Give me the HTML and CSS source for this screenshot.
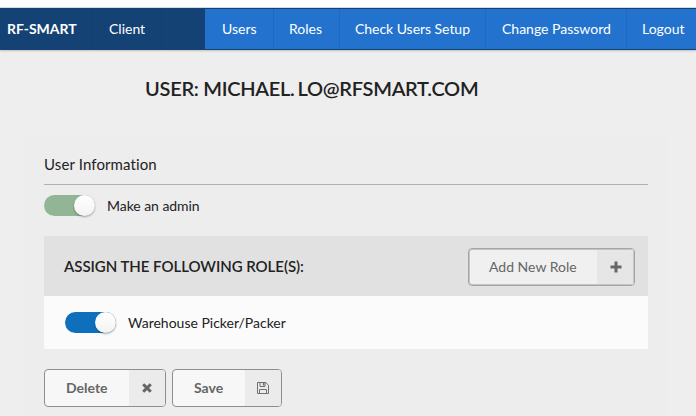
FILE: index.html
```html
<!DOCTYPE html>
<html lang="en">
<head>
<meta charset="utf-8">
<title>User</title>
<link rel="stylesheet" href="styles.css">
</head>
<body>
<nav class="nav">
  <a class="nav-item brand">RF-SMART</a>
  <a class="nav-item client">Client</a>
  <span class="nav-item spacer"></span>
  <a class="nav-item link users">Users</a>
  <a class="nav-item link roles">Roles</a>
  <a class="nav-item link check">Check Users Setup</a>
  <a class="nav-item link change">Change Password</a>
  <a class="nav-item link logout">Logout</a>
</nav>
<h1 class="title">USER: MICHAEL.<span class="title-rest">LO@RFSMART.COM</span></h1>
<main class="panel">
  <h2 class="section-title">User Information</h2>
  <div class="toggle-row">
    <span class="toggle green"><i class="knob"></i></span>
    <span class="label-admin">Make an admin</span>
  </div>
  <section class="roles-card">
    <header class="roles-head">
      <span class="roles-title">ASSIGN THE FOLLOWING ROLE(S):</span>
      <button class="btn add">
        <span class="btn-text">Add New Role</span>
        <span class="btn-icon"><svg width="12" height="12" viewBox="0 0 12 12"><path d="M4.5 .5h3v4h4v3h-4v4h-3v-4h-4v-3h4z" fill="#666"/></svg></span>
      </button>
    </header>
    <div class="role-row">
      <span class="toggle blue"><i class="knob"></i></span>
      <span class="label-role">Warehouse Picker/Packer</span>
    </div>
  </section>
  <div class="actions">
    <button class="btn delete">
      <span class="btn-text">Delete</span>
      <span class="btn-icon"><svg width="10" height="10" viewBox="0 0 10 10"><path d="M1.2 1.2l7.6 7.6M8.8 1.2L1.2 8.8" stroke="#666" stroke-width="3"/></svg></span>
    </button>
    <button class="btn save">
      <span class="btn-text">Save</span>
      <span class="btn-icon"><svg width="12" height="12" viewBox="0 0 12 12" fill="none" stroke="#707070"><path d="M.5.5h8.3l2.7 2.7v8.3H.5zM2.5 11.5v-4h7v4M3 .5v4h5v-4"/><path d="M6.6 1v2.5" stroke-width="1.5"/></svg></span>
    </button>
  </div>
</main>
</body>
</html>
```
FILE: styles.css
```css
* { box-sizing: border-box; }
body {
  margin: 0;
  height: 416px;
  overflow: hidden;
  background: #eee;
  border-top: 7px solid #fff;
  font-family: Lato, sans-serif;
  font-size: 14px;
  font-variant-ligatures: none;
  color: #222;
}
.nav {
  display: flex;
  height: 43px;
  border-top: 1px solid #d5dae0;
  background: #154274;
  box-shadow: 0 1px 2px rgba(0, 0, 0, .2);
  padding: 1px 0;
  color: #fff;
}
.nav-item {
  flex: none;
  line-height: 39px;
  white-space: nowrap;
  border-right: 1px solid #143e6f;
}
.link { background: #2373ce; border-color: #1e69be; padding-left: 16px; }
.brand { width: 93px; padding-left: 7px; font-weight: 700; }
.client { width: 69px; padding-left: 16px; }
.spacer { width: 43px; border: 0; }
.users { width: 69px; padding-left: 17px; }
.roles { width: 66px; padding-left: 15px; }
.check { width: 146px; padding-left: 15px; letter-spacing: -.04px; }
.change { width: 141px; padding-left: 16px; }
.logout { width: 80px; padding-left: 15px; border: 0; }
.title {
  margin: 25px 0 0 145px;
  height: 27px;
  font-size: 20px;
  line-height: 26px;
  font-weight: 600;
  letter-spacing: -.28px;
  white-space: nowrap;
}
.title-rest { margin-left: 3px; }
.panel {
  margin: 32px 28px 0 24px;
  height: 282px;
  padding: 0 20px;
  background: #ededed;
}
.section-title {
  margin: 0;
  height: 51px;
  padding-top: 20px;
  border-bottom: 1px solid #b0b0b0;
  font-size: 15px;
  line-height: 20px;
  font-weight: 400;
  letter-spacing: .12px;
}
.toggle-row { display: flex; align-items: center; height: 21px; margin-top: 10px; gap: 12px; }
.label-admin { letter-spacing: -.05px; }
.toggle {
  display: flex;
  justify-content: flex-end;
  flex: none;
  width: 51px;
  height: 21px;
  border-radius: 11px;
}
.green { background: #91b595; }
.blue { background: #0e70bc; }
.knob {
  width: 21px;
  height: 21px;
  border-radius: 50%;
  background: linear-gradient(#fff, #f3f3f3);
  box-shadow: 0 1px 2px rgba(0, 0, 0, .35);
}
.roles-card { margin-top: 20px; background: #fbfbfb; }
.roles-head {
  display: flex;
  align-items: center;
  justify-content: space-between;
  height: 60px;
  padding: 2px 13px 0 20px;
  background: #e1e1e1;
}
.roles-title { margin-top: -2px; font-size: 15px; font-weight: 600; letter-spacing: -.04px; }
.role-row { display: flex; align-items: center; gap: 12px; height: 53px; padding-left: 21px; }
.btn {
  display: flex;
  height: 38px;
  padding: 0;
  border: 1px solid #8e8e8e;
  border-radius: 4px;
  overflow: hidden;
  background: #f7f7f7;
  font: 14px Lato, sans-serif;
  color: #666;
}
.btn-text { flex: 1; display: flex; align-items: center; height: 100%; padding: 0 0 2px 21px; }
.btn-icon { display: flex; align-items: center; justify-content: center; width: 36px; height: 100%; background: #ebebeb; }
.add { width: 167px; border-color: #a5a5a5; background: #f0f0f0; box-shadow: inset 0 0 0 1px #c4c4c4; }
.add .btn-text { padding-left: 20px; }
.add .btn-icon { width: 37px; padding: 0; background: #e6e6e6; box-shadow: inset -1px 0 #c4c4c4, inset 0 1px #c4c4c4, inset 0 -1px #c4c4c4; }
.actions { display: flex; gap: 6px; margin-top: 20px; }
.delete, .save { font-weight: 700; }
.delete { width: 122px; }
.save { width: 110px; }
```
